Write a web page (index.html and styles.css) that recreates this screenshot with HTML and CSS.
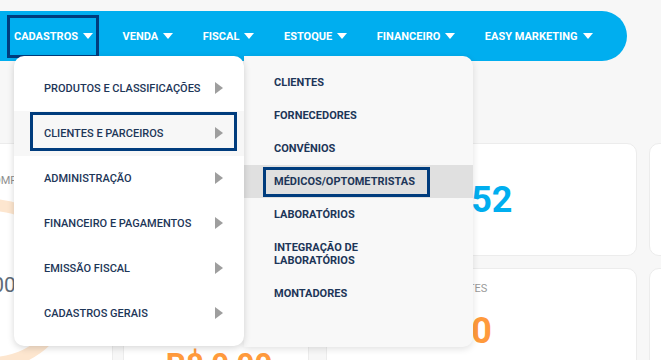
FILE: index.html
```html
<!DOCTYPE html>
<html lang="pt-BR">
<head>
<meta charset="utf-8">
<title>Cadastros</title>
<link rel="stylesheet" href="styles.css">
</head>
<body>
<header class="topbar">
  <nav class="nav">
    <a class="nav-item active">CADASTROS<span class="caret"></span></a>
    <a class="nav-item">VENDA<span class="caret"></span></a>
    <a class="nav-item">FISCAL<span class="caret"></span></a>
    <a class="nav-item">ESTOQUE<span class="caret"></span></a>
    <a class="nav-item">FINANCEIRO<span class="caret"></span></a>
    <a class="nav-item">EASY MARKETING<span class="caret"></span></a>
  </nav>
</header>

<main class="dash">
  <section class="col col-a">
    <div class="card card-tall">
      <div class="label label-a">COMPRAS</div>
      <div class="ring">
        <div class="ring-value">0,00</div>
        <div class="ring-sub">no mês</div>
      </div>
    </div>
  </section>
  <section class="col col-b">
    <div class="card card-top"></div>
    <div class="card">
      <div class="label">TICKET MÉDIO</div>
      <div class="money">R$ 0,00</div>
    </div>
  </section>
  <section class="col col-c">
    <div class="card card-top card-center">
      <div class="big blue">152</div>
    </div>
    <div class="card">
      <div class="label label-c">TOTAL DE CLIENTES</div>
      <div class="big orange">0</div>
    </div>
  </section>
  <section class="col col-d">
    <div class="card card-top"></div>
    <div class="card"></div>
  </section>
</main>

<div class="menu">
  <ul class="menu-list">
    <li class="menu-row"><a class="menu-link">PRODUTOS E CLASSIFICAÇÕES<span class="arrow"></span></a></li>
    <li class="menu-row hover"><a class="menu-link focus">CLIENTES E PARCEIROS<span class="arrow"></span></a></li>
    <li class="menu-row"><a class="menu-link">ADMINISTRAÇÃO<span class="arrow"></span></a></li>
    <li class="menu-row"><a class="menu-link">FINANCEIRO E PAGAMENTOS<span class="arrow"></span></a></li>
    <li class="menu-row"><a class="menu-link">EMISSÃO FISCAL<span class="arrow"></span></a></li>
    <li class="menu-row"><a class="menu-link">CADASTROS GERAIS<span class="arrow"></span></a></li>
  </ul>
</div>

<div class="submenu">
  <ul class="sub-list">
    <li class="sub-row"><a class="sub-link">CLIENTES</a></li>
    <li class="sub-row"><a class="sub-link">FORNECEDORES</a></li>
    <li class="sub-row"><a class="sub-link">CONVÊNIOS</a></li>
    <li class="sub-row hover"><a class="sub-link focus">MÉDICOS/OPTOMETRISTAS</a></li>
    <li class="sub-row"><a class="sub-link">LABORATÓRIOS</a></li>
    <li class="sub-row"><a class="sub-link">INTEGRAÇÃO DE<br>LABORATÓRIOS</a></li>
    <li class="sub-row"><a class="sub-link">MONTADORES</a></li>
  </ul>
</div>
</body>
</html>
```
FILE: styles.css
```css
* { box-sizing: border-box; }
html, body { overflow: hidden; }
body {
  margin: 0;
  width: 661px;
  height: 360px;
  background: #f7f7f7;
  font-family: Roboto, "Liberation Sans", Arial, sans-serif;
  color: #1d3658;
}
ul { list-style: none; margin: 0; padding: 0; }
a { text-decoration: none; color: inherit; }

/* top navigation */
.topbar { padding-top: 11px; }
.nav {
  width: 627px;
  height: 50px;
  background: #00aeef;
  border-radius: 0 25px 25px 0;
  display: flex;
  align-items: center;
  gap: 16.6px;
  padding-left: 7px;
}
.nav-item {
  display: flex;
  align-items: center;
  height: 43px;
  padding: 0 3px 0 4px;
  border: 3px solid transparent;
  color: #fff;
  font-size: 11px;
  font-weight: 700;
  white-space: nowrap;
}
.nav-item.active { border-color: #003c7d; }
.caret {
  width: 0; height: 0;
  margin-left: 5px;
  border-left: 5px solid transparent;
  border-right: 5px solid transparent;
  border-top: 6px solid #fff;
}

/* dashboard behind */
.dash {
  display: flex;
  align-items: flex-start;
  padding-top: 82px;
  margin-left: -110px;
}
.col { display: flex; flex-direction: column; gap: 12px; flex: none; }
.col-a { width: 223px; margin-right: 10px; }
.col-b { width: 186px; margin-right: 17px; }
.col-c { width: 311px; margin-right: 12px; }
.col-d { width: 200px; }
.card {
  background: #fff;
  border: 1px solid #ececec;
  border-radius: 10px;
  height: 160px;
}
.card-top { height: 113px; }
.card-tall { height: 400px; padding-top: 30px; }
.card-center { display: flex; align-items: center; justify-content: center; }
.label {
  font-size: 11px;
  line-height: 13px;
  color: #9a9a9a;
  padding: 13px 0 0 20px;
}
.label-a { padding: 0 0 0 95px; color: #8f8f8f; }
.label-c { padding-left: 59px; }
.ring {
  width: 170px;
  height: 170px;
  margin: 12px 0 0 15px;
  border-radius: 50%;
  border: 12px solid #fde6cf;
  display: flex;
  flex-direction: column;
  align-items: center;
  justify-content: center;
  padding: 14px 0 0 10px;
}
.ring-value { font-size: 21px; line-height: 24px; color: #5f6b78; }
.ring-sub { font-size: 10px; line-height: 12px; color: #8a8a8a; margin-right: 28px; }
.big {
  font-size: 36px;
  font-weight: 700;
  line-height: 40px;
  text-align: center;
}
.blue { color: #00aeef; }
.orange { color: #ff9a3c; margin-top: 16px; }
.money {
  font-size: 31px;
  font-weight: 700;
  line-height: 40px;
  text-align: center;
  color: #ff9a3c;
  margin-top: 50px;
  padding-left: 6px;
}

/* first-level dropdown */
.menu {
  position: absolute;
  left: 14px;
  top: 56px;
  width: 230px;
  height: 290px;
  background: #fff;
  border-radius: 10px;
  box-shadow: 0 2px 7px rgba(0, 0, 0, 0.16);
  padding: 10px 0;
  z-index: 3;
}
.menu-row { height: 45px; padding: 1px 7px 5px 16px; }
.menu-row.hover { background: #f7f7f7; }
.menu-link {
  height: 39px;
  display: flex;
  align-items: center;
  justify-content: space-between;
  padding: 3px 11px 0 11px;
  border: 3px solid transparent;
  font-size: 11px;
  font-weight: 500;
  white-space: nowrap;
}
.menu-link.focus { border-color: #003c7d; }
.arrow {
  width: 0; height: 0;
  border-top: 6.5px solid transparent;
  border-bottom: 6.5px solid transparent;
  border-left: 8px solid #9e9e9e;
}

/* second-level dropdown */
.submenu {
  position: absolute;
  left: 244px;
  top: 56px;
  width: 229px;
  height: 291px;
  background: #f8f8f8;
  border-radius: 0 10px 10px 0;
  box-shadow: 0 2px 7px rgba(0, 0, 0, 0.12);
  padding: 10px 0;
  z-index: 2;
}
.sub-row { padding: 2px 0 1px 19px; }
.sub-row.hover { background: #e0e0e0; }
.sub-link {
  display: inline-block;
  padding: 5px 12px 6px 8px;
  border: 3px solid transparent;
  font-size: 11px;
  font-weight: 700;
  line-height: 13px;
  white-space: nowrap;
}
.sub-link.focus { border-color: #003c7d; }
```
